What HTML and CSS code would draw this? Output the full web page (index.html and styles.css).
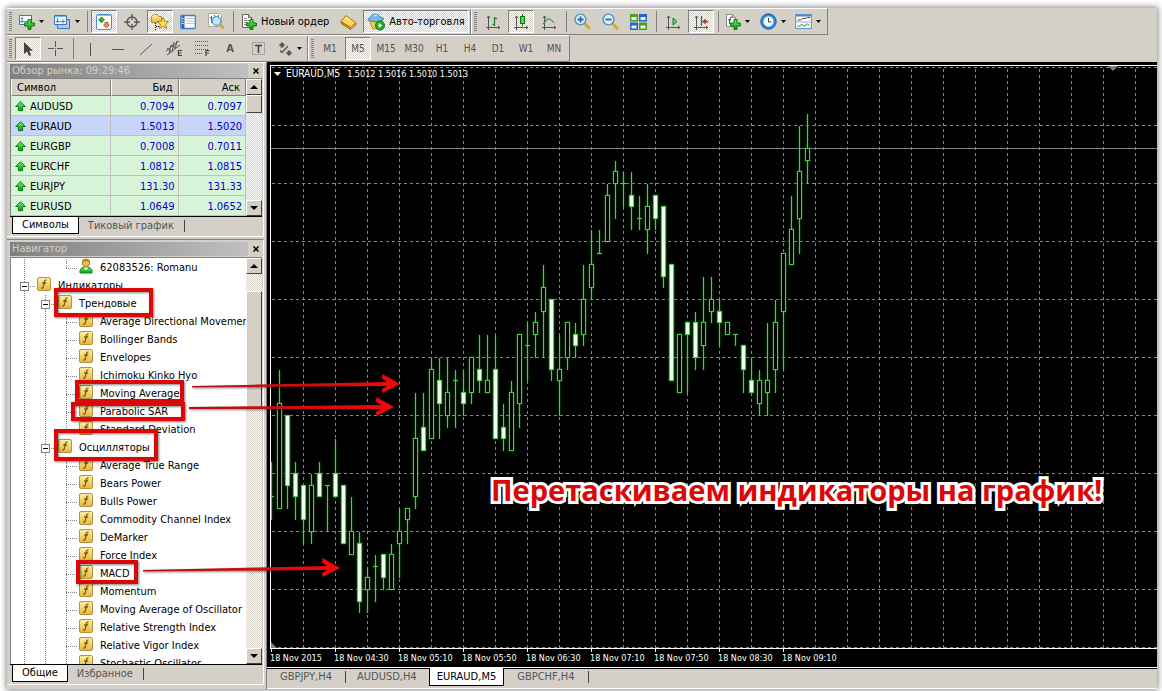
FILE: index.html
```html
<!DOCTYPE html>
<html lang="ru">
<head>
<meta charset="utf-8">
<title>EURAUD,M5</title>
<link rel="stylesheet" href="styles.css">
</head>
<body>
<!-- shared symbols -->
<svg class="defs" width="0" height="0">
	<defs>
		<linearGradient id="gold" x1="0" y1="0" x2="0" y2="1"><stop offset="0" stop-color="#fff3a8"/><stop offset="1" stop-color="#e3b53c"/></linearGradient>
		<linearGradient id="green" x1="0" y1="0" x2="0" y2="1"><stop offset="0" stop-color="#6df06d"/><stop offset="1" stop-color="#0a9a0a"/></linearGradient>
		<linearGradient id="red" x1="0" y1="0" x2="1" y2="0"><stop offset="0" stop-color="#a81414"/><stop offset="1" stop-color="#f00808"/></linearGradient>
	</defs>
	<symbol id="func" viewBox="0 0 14 14">
		<rect x=".5" y=".5" width="13" height="13" rx="1.5" fill="url(#gold)" stroke="#b8913a"/>
		<path d="M9.6 3.2C8 2.6 7.6 3.8 7.3 5L6.3 9.6C6 10.9 5.4 11.3 4.3 10.8M5.2 6h4" fill="none" stroke="#7a5a10" stroke-width="1.3"/>
	</symbol>
	<symbol id="up" viewBox="0 0 11 11">
		<path d="M5.5.7l4.8 4.8H7.6v4.2H3.4V5.500H.7z" fill="url(#green)" stroke="#0a7a1a"/>
	</symbol>
	<symbol id="plus" viewBox="0 0 11 11">
		<path d="M4 .6h3V4h3.400v3H7v3.400H4V7H.6V4H4z" fill="url(#green)" stroke="#067806"/>
	</symbol>
	<symbol id="drop" viewBox="0 0 7 4"><path d="M1 0h5L3.500 3z" fill="#000"/></symbol>
</svg>

<div class="window">
	<div class="toolbar wide">
		<i class="grip"></i>
		<button class="tool menu" title="Новый график"><svg width="16" height="16" viewBox="0 0 16 16"><path d="M.5 1.500h12v9H.5z" fill="#f4faff" stroke="#3a78b8"/><path d="M3 3v6M1.500 7.500h9M2 4.500h2" stroke="#5a88a8" fill="none"/><use href="#plus" x="5" y="5" width="11" height="11"/></svg><svg width="7" height="4"><use href="#drop" width="7" height="4"/></svg></button>
		<button class="tool menu" title="Профили"><svg width="18" height="16" viewBox="0 0 18 16"><path d="M4.500 5.500h12v9h-12z" fill="#a8ccf0" stroke="#3a78b8"/><path d="M1.500 1.500h12v9h-12z" fill="#eaf4ff" stroke="#3a78b8"/><path d="M2 2.500h11" stroke="#7ab0e8"/><path d="M4.500 4v5M3 7.500h9M10 5.500v4" stroke="#5a88a8"/></svg><svg width="7" height="4"><use href="#drop" width="7" height="4"/></svg></button>
		<i class="sep"></i>
		<button class="tool on" title="Обзор рынка"><svg width="16" height="16" viewBox="0 0 16 16"><rect x=".5" y=".5" width="15" height="15" rx="1.500" fill="#fff" stroke="#4a90d0"/><path d="M1 1.500h14" stroke="#8cc0ec"/><path d="M5.500 3l3 3H7v2H4V6H2.500z" fill="#2db82d" stroke="#0a7a1a" stroke-width=".7"/><path d="M10.500 14l-3-3H9V8.500h3V11h1.500z" fill="#ff9050" stroke="#d03808" stroke-width=".8"/></svg></button>
		<button class="tool" title="Перекрестие"><svg width="16" height="16" viewBox="0 0 16 16"><circle cx="8" cy="8" r="5" fill="none" stroke="#585858" stroke-width="1.500"/><path d="M8 0v6M8 10v6M0 8h6M10 8h6" stroke="#585858" stroke-width="1.300"/></svg></button>
		<button class="tool on" title="Навигатор"><svg width="18" height="18" viewBox="0 0 18 18"><path d="M.5 3.500l2-2h4l1 2h3v6H.5z" fill="url(#gold)" stroke="#b8913a"/><path d="M4.500 10v7M5 13.500h3" stroke="#222" stroke-dasharray="1 1"/><path d="M12 4.500l1.700 3.800 4 .4-3 2.700.9 4.100-3.600-2.100-3.600 2.100.9-4.100-3-2.700 4-.4z" fill="#ffdf50" stroke="#b08010"/></svg></button>
		<button class="tool" title="Окно данных"><svg width="16" height="16" viewBox="0 0 16 16"><rect x=".8" y="1.500" width="14.500" height="13" rx="1" fill="#fff" stroke="#3a80c8" stroke-width="1.300"/><path d="M3 2v12" stroke="#2868b0" stroke-width="3"/><path d="M6 4.500h8M6 7h8M6 9.500h8" stroke="#b8c4d8"/><path d="M2 4.500h1.500M2 7h1.500M2 9.500h1.500" stroke="#fff"/></svg></button>
		<button class="tool" title="Тестер стратегий"><svg width="17" height="17" viewBox="0 0 17 17"><path d="M.5.5h11l2 2v11H.5z" fill="#fdfdf4" stroke="#aaa"/><path d="M3.500 3v7M2 4.500h2M10.500 2v5M6.500 2v3" stroke="#486088"/><circle cx="8.500" cy="8" r="4.300" fill="#bfe2ff" fill-opacity=".85" stroke="#5a9ad0" stroke-width="1.300"/><path d="M12 11.500l4 4" stroke="#d8a020" stroke-width="2.400"/></svg></button>
		<i class="sep"></i>
		<button class="tool text"><svg width="16" height="16" viewBox="0 0 16 16"><path d="M1.500.5h6l3 3v10h-9z" fill="#fff" stroke="#666"/><path d="M7.500.5v3h3" fill="#ccc" stroke="#666"/><path d="M3 4.500h3M3 6.500h6M3 8.500h4M3 10.500h3" stroke="#888"/><use href="#plus" x="5" y="5" width="11" height="11"/></svg><span>Новый ордер</span></button>
		<button class="tool" title="MetaEditor"><svg width="17" height="16" viewBox="0 0 17 16"><path d="M6 1.500l10 7.500-5.500 4.500L1 7.500z" fill="#ffd95a" stroke="#b07808"/><path d="M1 7.500L10.500 13.500v2L1 9.500z" fill="#c88a10" stroke="#996008" stroke-width=".7"/><path d="M10.500 15.500L16 11V9l-5.500 4.500z" fill="#e8c060" stroke="#996008" stroke-width=".7"/><path d="M6 3.500l4 3" stroke="#fff4b8" stroke-width="1.500"/></svg></button>
		<button class="tool text on"><svg width="18" height="18" viewBox="0 0 18 18"><path d="M2 7l4 9 8-1 2-9z" fill="#f4cc48" stroke="#c09020"/><path d="M.8 6.500C3 4 4 4.500 4.500 3 5.500.5 11 .5 12 3c.5 1.500 3 1 5 2.500-3 3.500-12 4.500-16.200 1z" fill="#78b8e4" stroke="#3880b4"/><path d="M6 3.500c1-1.500 3-1.500 4-1" stroke="#d8f0ff" fill="none"/><circle cx="13" cy="12.500" r="4.500" fill="#22b02a" stroke="#0a7a14"/><path d="M11.700 10v5l3.600-2.500z" fill="#fff"/></svg><span>Авто-торговля</span></button>
		<i class="edge"></i>
		<i class="grip"></i>
		<button class="tool" title="Бары"><svg width="16" height="16" viewBox="0 0 16 16"><path d="M3.500 2v14M1 13.500h14M2 4l1.500-2L5 4M13 12l2 1.500-2 1.500" fill="none" stroke="#555"/><path d="M9.500 3v9M7.500 10.500h2M9.500 4.500H12" stroke="#1a8a2a" stroke-width="1.300" fill="none"/></svg></button>
		<button class="tool on" title="Японские свечи"><svg width="16" height="16" viewBox="0 0 16 16"><path d="M3.500 2v14M1 13.500h14M2 4l1.500-2L5 4M13 12l2 1.500-2 1.500" fill="none" stroke="#555"/><path d="M9.500 0v12" stroke="#0a7a1a"/><rect x="7.500" y="2.500" width="4" height="7" fill="#3ede4e" stroke="#0a7a1a"/></svg></button>
		<button class="tool" title="Линия"><svg width="16" height="16" viewBox="0 0 16 16"><path d="M3.500 2v14M1 13.500h14M2 4l1.500-2L5 4M13 12l2 1.500-2 1.500" fill="none" stroke="#555"/><path d="M2 10l4-4.500c2-1.500 4-.5 7 3.500" stroke="#3a9a4a" stroke-width="1.200" fill="none"/></svg></button>
		<i class="sep"></i>
		<button class="tool" title="Увеличить"><svg width="17" height="17" viewBox="0 0 17 17"><path d="M10 10l6 6" stroke="#d8a820" stroke-width="2.800"/><circle cx="6.500" cy="6.500" r="5.400" fill="#d8f0ff" stroke="#4a94c8" stroke-width="1.400"/><path d="M6.500 3.500v6M3.500 6.500h6" stroke="#2a6ca0" stroke-width="1.800"/></svg></button>
		<button class="tool" title="Уменьшить"><svg width="17" height="17" viewBox="0 0 17 17"><path d="M10 10l6 6" stroke="#d8a820" stroke-width="2.800"/><circle cx="6.500" cy="6.500" r="5.400" fill="#d8f0ff" stroke="#4a94c8" stroke-width="1.400"/><path d="M3.500 6.500h6" stroke="#2a6ca0" stroke-width="1.800"/></svg></button>
		<button class="tool" title="Окна"><svg width="17" height="16" viewBox="0 0 17 16"><path d="M0 0h8v7.500H0zM9 8.500h8V16H9z" fill="#48a020"/><path d="M9 0h8v7.500H9zM0 8.500h8V16H0z" fill="#2c62c8"/><path d="M1.500 3h5v3h-5zM10.500 3h5v3h-5zM1.500 11.500h5v3h-5zM10.500 11.500h5v3h-5z" fill="#e8f4f4"/></svg></button>
		<i class="sep"></i>
		<button class="tool" title="Автопрокрутка"><svg width="16" height="16" viewBox="0 0 16 16"><path d="M3.500 2v14M1 13.500h14M2 4l1.500-2L5 4M13 12l2 1.500-2 1.500" fill="none" stroke="#555"/><path d="M8 4v7l4-3.500z" fill="#6ad87a" stroke="#0a7a1a"/></svg></button>
		<button class="tool on" title="Сдвиг графика"><svg width="16" height="16" viewBox="0 0 16 16"><path d="M3.500 2v14M1 13.500h14M2 4l1.500-2L5 4M13 12l2 1.500-2 1.500" fill="none" stroke="#555"/><path d="M8.500 2v10" stroke="#226a9a" stroke-width="1.300"/><path d="M9.500 7.500l3-2.500v2H15v1h-2.500v2z" fill="#b03808" stroke="#b03808" stroke-width=".6"/></svg></button>
		<i class="sep"></i>
		<button class="tool menu" title="Индикаторы"><svg width="16" height="18" viewBox="0 0 16 18"><path d="M1.500 1.500h6l3 3v9h-9z" fill="#fff" stroke="#888"/><path d="M7.500 1.500v3h3" fill="#ccc" stroke="#888"/><path d="M7 4c-1.500-.5-1.800.5-2 2l-.5 5M3 7h3" stroke="#444" fill="none"/><use href="#plus" x="5" y="6" width="11" height="11"/></svg><svg width="7" height="4"><use href="#drop" width="7" height="4"/></svg></button>
		<button class="tool menu" title="Периоды"><svg width="17" height="17" viewBox="0 0 17 17"><circle cx="8.500" cy="8.500" r="7.700" fill="#2c84d8" stroke="#1a5ca8"/><circle cx="8.500" cy="8.500" r="5.200" fill="#f4faff" stroke="#80b8e8"/><path d="M8.500 5v4h3" stroke="#444" fill="none"/></svg><svg width="7" height="4"><use href="#drop" width="7" height="4"/></svg></button>
		<button class="tool menu" title="Шаблоны"><svg width="17" height="15" viewBox="0 0 17 15"><rect x=".6" y=".6" width="15.800" height="13.800" fill="#f6fbff" stroke="#5a94c8"/><path d="M1 1.500h15" stroke="#4a8ccc" stroke-width="2"/><path d="M1 8h15" stroke="#9ab8d8"/><path d="M2.500 6h3l2-1.500h3l2-1H15" stroke="#a03020" fill="none"/><path d="M2.500 12h2l2-1.500 3 1.500 3-2 2 1.500" stroke="#2a8a3a" fill="none"/></svg><svg width="7" height="4"><use href="#drop" width="7" height="4"/></svg></button>
	</div>

	<div class="toolbar">
		<i class="grip"></i>
		<button class="tool on" title="Курсор"><svg width="16" height="16" viewBox="0 0 16 16"><path d="M4 1v12l3-2.500 2 4.500 2.200-1L9.200 9.700H13z" fill="#444"/></svg></button>
		<button class="tool" title="Перекрестие"><svg width="16" height="16" viewBox="0 0 16 16"><path d="M7.500 0v6M7.500 9v6M0 7.500h6M9 7.500h6" stroke="#555"/><path d="M7 7h1v1H7z" fill="#555"/></svg></button>
		<i class="sep"></i>
		<button class="tool" title="Вертикальная линия"><svg width="16" height="16" viewBox="0 0 16 16"><path d="M8.500 2v13" stroke="#555"/></svg></button>
		<button class="tool" title="Горизонтальная линия"><svg width="16" height="16" viewBox="0 0 16 16"><path d="M2 8.500h12" stroke="#555"/></svg></button>
		<button class="tool" title="Трендовая линия"><svg width="16" height="16" viewBox="0 0 16 16"><path d="M2 14L14 3" stroke="#555"/></svg></button>
		<button class="tool" title="Канал"><svg width="17" height="17" viewBox="0 0 17 17"><path d="M0 11L13 1M1 15L14 5M3 14L5 5M6 12L8 2M9 9L11 1M1 8l5 4M5 5l5 3" stroke="#555" fill="none"/><path d="M16 10.500h-3.500v5H16M12.500 13h3" stroke="#444" stroke-width="1.200" fill="none"/></svg></button>
		<button class="tool" title="Фибоначчи"><svg width="17" height="17" viewBox="0 0 17 17"><path d="M1 1.500h14M1 5.500h14M1 9.500h14M1 13.500h8" stroke="#555" stroke-dasharray="1 1"/><path d="M15.500 10.500H12V16M12 13h3" stroke="#444" stroke-width="1.200" fill="none"/></svg></button>
		<button class="tool letter">A</button>
		<button class="tool" title="Метка"><svg width="15" height="15" viewBox="0 0 15 15"><path d="M1.500 1.500h12v12h-12z" fill="none" stroke="#777" stroke-dasharray="1 1"/><path d="M4 4.500h7M7.500 4v8" stroke="#444" stroke-width="1.600"/></svg></button>
		<button class="tool menu" title="Стрелки"><svg width="16" height="16" viewBox="0 0 16 16"><path d="M5 1l3.500 3.500H6.500v2h-3v-2H1.500zM12 15l-3.500-3.500h2v-2h3v2h2z" fill="#555"/><path d="M3 9.500l2 2L11 5" fill="none" stroke="#555" stroke-width="1.300"/></svg><svg width="7" height="4"><use href="#drop" width="7" height="4"/></svg></button>
		<i class="edge"></i>
		<i class="grip"></i>
		<button class="tool period">M1</button>
		<button class="tool period on">M5</button>
		<button class="tool period">M15</button>
		<button class="tool period">M30</button>
		<button class="tool period">H1</button>
		<button class="tool period">H4</button>
		<button class="tool period">D1</button>
		<button class="tool period">W1</button>
		<button class="tool period">MN</button>
	</div>

	<div class="workspace">
		<div class="sidebar">
			<div class="panel market">
				<div class="caption"><span>Обзор рынка: 09:29:46</span><button class="close" title="Закрыть"><svg width="6" height="6" viewBox="0 0 6 6"><path d="M.5.5l5 5M5.500.5l-5 5" stroke="#000" stroke-width="1.500"/></svg></button></div>
				<div class="pane">
					<table class="quotes">
						<thead><tr><th>Символ</th><th>Бид</th><th>Аск</th></tr></thead>
						<tbody>
							<tr><td><svg width="11" height="11"><use href="#up"/></svg>AUDUSD</td><td>0.7094</td><td>0.7097</td></tr>
							<tr class="current"><td><svg width="11" height="11"><use href="#up"/></svg>EURAUD</td><td>1.5013</td><td>1.5020</td></tr>
							<tr><td><svg width="11" height="11"><use href="#up"/></svg>EURGBP</td><td>0.7008</td><td>0.7011</td></tr>
							<tr><td><svg width="11" height="11"><use href="#up"/></svg>EURCHF</td><td>1.0812</td><td>1.0815</td></tr>
							<tr><td><svg width="11" height="11"><use href="#up"/></svg>EURJPY</td><td>131.30</td><td>131.33</td></tr>
							<tr><td><svg width="11" height="11"><use href="#up"/></svg>EURUSD</td><td>1.0649</td><td>1.0652</td></tr>
						</tbody>
					</table>
					<div class="scroll"><button class="up" title="Вверх"></button><div class="thumb"></div><button class="down" title="Вниз"></button></div>
				</div>
				<div class="tabs"><button class="tab active">Символы</button><button class="tab">Тиковый график</button></div>
			</div>

			<div class="panel navigator">
				<div class="caption"><span>Навигатор</span><button class="close" title="Закрыть"><svg width="6" height="6" viewBox="0 0 6 6"><path d="M.5.5l5 5M5.500.5l-5 5" stroke="#000" stroke-width="1.500"/></svg></button></div>
				<div class="pane">
					<ul class="tree">
						<li><i class="guide"></i><i class="guide empty"></i><i class="joint last"></i><svg width="14" height="16" viewBox="0 0 14 16"><path d="M1 15c-.5-4 1.500-6 6-6s6.500 2 6 6z" fill="url(#green)" stroke="#0a8a1a"/><path d="M5 9.500l2 3 2-3z" fill="#fff"/><circle cx="7" cy="4.800" r="3.800" fill="#ecc050" stroke="#a87818"/><path d="M3.500 4C4 0 10 0 10.500 4 8 3 6 3 3.500 4z" fill="#b88420"/></svg>62083526: Romanu</li>
						<li><i class="joint"><button class="expander" title="Свернуть"></button></i><svg width="14" height="14"><use href="#func"/></svg>Индикаторы</li>
						<li><i class="guide"></i><i class="joint"><button class="expander" title="Свернуть"></button></i><svg width="14" height="14"><use href="#func"/></svg>Трендовые</li>
						<li><i class="guide"></i><i class="guide"></i><i class="joint"></i><svg width="14" height="14"><use href="#func"/></svg>Average Directional Movement</li>
						<li><i class="guide"></i><i class="guide"></i><i class="joint"></i><svg width="14" height="14"><use href="#func"/></svg>Bollinger Bands</li>
						<li><i class="guide"></i><i class="guide"></i><i class="joint"></i><svg width="14" height="14"><use href="#func"/></svg>Envelopes</li>
						<li><i class="guide"></i><i class="guide"></i><i class="joint"></i><svg width="14" height="14"><use href="#func"/></svg>Ichimoku Kinko Hyo</li>
						<li><i class="guide"></i><i class="guide"></i><i class="joint"></i><svg width="14" height="14"><use href="#func"/></svg>Moving Average</li>
						<li><i class="guide"></i><i class="guide"></i><i class="joint"></i><svg width="14" height="14"><use href="#func"/></svg>Parabolic SAR</li>
						<li><i class="guide"></i><i class="guide"></i><i class="joint last"></i><svg width="14" height="14"><use href="#func"/></svg>Standard Deviation</li>
						<li><i class="guide"></i><i class="joint"><button class="expander" title="Свернуть"></button></i><svg width="14" height="14"><use href="#func"/></svg>Осцилляторы</li>
						<li><i class="guide"></i><i class="guide"></i><i class="joint"></i><svg width="14" height="14"><use href="#func"/></svg>Average True Range</li>
						<li><i class="guide"></i><i class="guide"></i><i class="joint"></i><svg width="14" height="14"><use href="#func"/></svg>Bears Power</li>
						<li><i class="guide"></i><i class="guide"></i><i class="joint"></i><svg width="14" height="14"><use href="#func"/></svg>Bulls Power</li>
						<li><i class="guide"></i><i class="guide"></i><i class="joint"></i><svg width="14" height="14"><use href="#func"/></svg>Commodity Channel Index</li>
						<li><i class="guide"></i><i class="guide"></i><i class="joint"></i><svg width="14" height="14"><use href="#func"/></svg>DeMarker</li>
						<li><i class="guide"></i><i class="guide"></i><i class="joint"></i><svg width="14" height="14"><use href="#func"/></svg>Force Index</li>
						<li><i class="guide"></i><i class="guide"></i><i class="joint"></i><svg width="14" height="14"><use href="#func"/></svg>MACD</li>
						<li><i class="guide"></i><i class="guide"></i><i class="joint"></i><svg width="14" height="14"><use href="#func"/></svg>Momentum</li>
						<li><i class="guide"></i><i class="guide"></i><i class="joint"></i><svg width="14" height="14"><use href="#func"/></svg>Moving Average of Oscillator</li>
						<li><i class="guide"></i><i class="guide"></i><i class="joint"></i><svg width="14" height="14"><use href="#func"/></svg>Relative Strength Index</li>
						<li><i class="guide"></i><i class="guide"></i><i class="joint"></i><svg width="14" height="14"><use href="#func"/></svg>Relative Vigor Index</li>
						<li><i class="guide"></i><i class="guide"></i><i class="joint"></i><svg width="14" height="14"><use href="#func"/></svg>Stochastic Oscillator</li>
					</ul>
					<div class="scroll"><button class="up" title="Вверх"></button><div class="thumb"></div><button class="down" title="Вниз"></button></div>
				</div>
				<div class="tabs"><button class="tab active">Общие</button><button class="tab">Избранное</button></div>
			</div>
		</div>

		<div class="charts">
			<div class="chart">
				<div class="plot">
					<svg id="plot" class="canvas"></svg>
					<div class="info"><svg width="7" height="4" viewBox="0 0 7 4"><path d="M0 0h7L3.500 4z" fill="#fff"/></svg><span>EURAUD,M5</span><span class="prices">1.5012 1.5016 1.5010 1.5013</span></div>
				</div>
				<div class="axis"><span>18 Nov 2015</span><span>18 Nov 04:30</span><span>18 Nov 05:10</span><span>18 Nov 05:50</span><span>18 Nov 06:30</span><span>18 Nov 07:10</span><span>18 Nov 07:50</span><span>18 Nov 08:30</span><span>18 Nov 09:10</span></div>
			</div>
			<div class="tabs"><button class="tab">GBPJPY,H4</button><button class="tab">AUDUSD,H4</button><button class="tab active">EURAUD,M5</button><button class="tab">GBPCHF,H4</button></div>
		</div>
	</div>

	<!-- marks drawn over the terminal -->
	<svg class="marks">
		<g fill="none" stroke="#dc0808" stroke-width="4">
			<rect x="49" y="282" width="95" height="25"/>
			<rect x="70" y="374" width="105" height="19"/>
			<rect x="66" y="396" width="110" height="15"/>
			<rect x="49" y="423" width="100" height="28"/>
			<rect x="71" y="554" width="58" height="20"/>
		</g>
		<g fill="url(#red)">
			<path d="M185 378L380 374l-5-3.500.5-4.500 17.500 10-17.500 9-.5-4 5-3L185 379.500z"/>
			<path d="M182 399L374 397l-5-3.500.5-4.500 17.500 10-17.500 9-.5-4 5-3L182 401z"/>
			<path d="M136 562L320 558l-5-3.500.5-4.500 17.500 10-17.500 9-.5-4 5-3L136 563.500z"/>
		</g>
	</svg>
	<div class="slogan">Перетаскиваем индикаторы на график!</div>
</div>

<script src="chart.js"></script>
</body>
</html>
```
FILE: styles.css
```css
* {
	box-sizing: border-box;
	margin: 0;
	padding: 0;
}

body {
	background: #fff;
	font: 11px/14px "DejaVu Sans Condensed", "Noto Sans", sans-serif;
	color: #000;
	overflow: hidden;
}

button {
	font: inherit;
	color: inherit;
	border: 0;
	background: none;
}

svg {
	flex: none;
}

.defs {
	position: absolute;
}

.window {
	position: relative;
	display: flex;
	flex-direction: column;
	height: calc(100vh - 10px);
	margin: 8px 5px 2px 7px;
	background: #d4d0c8;
	box-shadow: 0 0 6px 1px #888;
}

/**** toolbars ****/
.toolbar {
	display: flex;
	align-items: center;
	align-self: flex-start;
	gap: 2px;
	height: 27px;
	padding: 0 2px;
	border-top: 1px solid #fff;
	border-bottom: 1px solid #808080;
	border-right: 1px solid #808080;
}

.grip {
	width: 3px;
	height: 19px;
	margin-right: 1px;
	background: repeating-linear-gradient(#808080 0 1px, transparent 1px 2px);
}

.sep {
	width: 1px;
	height: 21px;
	margin: 0 1px 0 2px;
	background: #808080;
}

.edge {
	width: 2px;
	height: 25px;
	margin-left: -1px;
	background: #808080;
	border-right: 1px solid #fff;
}

.tool {
	display: flex;
	align-items: center;
	justify-content: center;
	width: 26px;
	height: 23px;
	border: 1px solid transparent;
}

.tool.menu {
	width: 33px;
	gap: 3px;
}

.tool.text {
	width: auto;
	padding: 0 3px;
	gap: 4px;
}

.tool.period {
	font-size: 10px;
	color: #505050;
}

.tool.letter {
	font-size: 11px;
	font-weight: bold;
	color: #555;
}

.tool.on {
	border-color: #808080 #fff #fff #808080;
	background: repeating-conic-gradient(#fff 0 25%, #d4d0c8 0 50%) 0 0 / 2px 2px;
}

/**** panels ****/
.workspace {
	display: flex;
	flex: 1;
	min-height: 0;
}

.sidebar {
	display: flex;
	flex-direction: column;
	gap: 2px;
	width: 260px;
	padding: 0 2px 4px 0;
	border-top: 1px solid #fff;
	border-right: 1px solid #808080;
}

.panel {
	display: flex;
	flex-direction: column;
	padding: 1px 1px 2px 3px;
	border-right: 1px solid #fff;
	border-bottom: 1px solid #fff;
}

.navigator {
	flex: 1;
	min-height: 0;
	border-top: 1px solid #808080;
}

.caption {
	display: flex;
	align-items: center;
	height: 14px;
	color: #d4d0c8;
}

.navigator .caption {
	height: 16px;
}

.caption span {
	flex: 1;
	padding-left: 2px;
	background: linear-gradient(90deg, #808080, #c0c0c0);
}

.close {
	display: flex;
	justify-content: center;
	width: 12px;
	margin-left: 2px;
}

.pane {
	display: flex;
	border: solid #808080;
	border-width: 1px 0 0 1px;
}

.navigator .pane {
	flex: 1;
	min-height: 0;
	background: #fff;
}

.quotes {
	flex: 1;
	border-collapse: separate;
	border-spacing: 0;
	table-layout: fixed;
	line-height: 14px;
}

.quotes th {
	height: 17px;
	padding: 2px 5px 0;
	font-weight: normal;
	text-align: right;
	background: #d4d0c8;
	border-right: 1px solid #808080;
	border-bottom: 1px solid #808080;
	border-left: 1px solid #fff;
}

.quotes th:first-child {
	width: 100px;
	text-align: left;
}

.quotes td {
	height: 20px;
	padding: 2px 3px 0;
	text-align: right;
	color: #0000d0;
	background: #d8f4d8;
	border-right: 1px solid #c0c0c0;
	border-bottom: 1px solid #c0c0c0;
}

.quotes td:first-child {
	padding-left: 4px;
	text-align: left;
	color: #000;
}

.quotes td svg {
	margin-right: 4px;
	vertical-align: -2px;
}

.quotes .current td {
	background: #c8d4f8;
}

.scroll {
	display: flex;
	flex-direction: column;
	width: 16px;
	background: repeating-conic-gradient(#fff 0 25%, #d4d0c8 0 50%) 0 0 / 2px 2px;
}

.scroll button,
.thumb {
	height: 16px;
	background: #d4d0c8;
	border: 1px solid;
	border-color: #fff #404040 #404040 #fff;
}

.scroll button::before {
	content: "";
	display: block;
	width: 0;
	margin: 0 auto;
	border: 4px solid transparent;
	border-top: 0;
	border-bottom-color: #000;
}

.scroll .down::before {
	border-top: 4px solid #000;
	border-bottom: 0;
}

.scroll .down {
	margin-top: auto;
}

.market .thumb {
	height: 18px;
}

.navigator .thumb {
	height: 117px;
	margin-top: 17px;
}

/**** tree ****/
.tree {
	flex: 1;
	min-width: 0;
	padding-top: 1px;
	overflow: hidden;
	list-style: none;
}

.tree li {
	display: flex;
	align-items: center;
	height: 18px;
	padding-left: 13px;
	white-space: nowrap;
}

.tree svg {
	margin: 0 7px 4px 0;
}

.guide,
.joint {
	flex: none;
	width: 21px;
	height: 18px;
	background: repeating-linear-gradient(#808080 0 1px, transparent 1px 2px) 0 0 / 1px 18px no-repeat;
}

.guide.empty {
	background: none;
}

.joint {
	display: flex;
	align-items: center;
	width: 13px;
	background:
		repeating-linear-gradient(#808080 0 1px, transparent 1px 2px) 0 0 / 1px 18px no-repeat,
		repeating-linear-gradient(90deg, #808080 0 1px, transparent 1px 2px) 0 9px / 12px 1px no-repeat;
}

.joint.last {
	background-size: 1px 10px, 12px 1px;
}

.expander {
	width: 9px;
	height: 9px;
	margin-left: -4px;
	border: 1px solid #808080;
	background: linear-gradient(#000, #000) center / 5px 1px no-repeat #fff;
}

/**** tabs ****/
.tabs {
	display: flex;
	height: 18px;
	padding-left: 2px;
	border-top: 1px solid #000;
}

.tab {
	display: flex;
	align-items: center;
	padding: 0 9px;
	color: #555;
}

.tab:not(.active)::after {
	content: "";
	width: 1px;
	height: 12px;
	margin: 0 -10px 0 10px;
	background: #444;
}

.tab.active {
	color: #000;
	background: #fff;
	border: solid #000;
	border-width: 0 1px 1px;
}

.tabs .tab:nth-last-child(n+2):has(+ .active)::after {
	visibility: hidden;
}

/**** chart ****/
.charts {
	display: flex;
	flex: 1;
	flex-direction: column;
	min-width: 0;
}

.charts .tabs {
	height: 22px;
	padding: 0 0 2px;
	border-top: 1px solid #fff;
	border-bottom: 1px solid #fff;
	box-shadow: inset 0 1px #000;
}

.charts .tab {
	padding: 0 10px;
	margin-left: 3px;
}

.charts .tab:not(.active)::after {
	margin: 0 -12px 0 13px;
}

.charts .tab.active {
	padding: 0 7px;
	margin: 0;
}

.chart {
	display: flex;
	flex: 1;
	flex-direction: column;
	min-height: 0;
	padding: 3px 0 0 3px;
	background: #000;
}

.plot {
	position: relative;
	flex: 1;
	min-height: 0;
	border: solid #fff;
	border-width: 1px 0 1px 1px;
}

.canvas {
	display: block;
	width: 100%;
	height: 100%;
}

.info {
	position: absolute;
	top: 1px;
	left: 3px;
	display: flex;
	align-items: center;
	gap: 5px;
	font-size: 10px;
	color: #fff;
}

.prices {
	padding-left: 2px;
	font-size: 9px;
}

.axis {
	display: flex;
	height: 18px;
	font-size: 9px;
	line-height: 18px;
	color: #fff;
}

.axis span {
	flex: none;
	width: 64px;
	white-space: nowrap;
	background: linear-gradient(#fff, #fff) 1px 0 / 1px 3px no-repeat;
}

.grid {
	stroke: #808894;
	stroke-dasharray: 3 3;
}

.bid {
	stroke: #78828c;
}

.candles {
	filter: drop-shadow(0 0 1px #0a8c0a);
}

.candle {
	fill: #000;
	stroke: #44d044;
	shape-rendering: crispEdges;
}

.candle.bear {
	fill: #f0fff0;
}

.corner {
	fill: #78828c;
}

/**** marks ****/
.marks {
	position: absolute;
	top: 0;
	left: 0;
	width: 100%;
	height: 100%;
	pointer-events: none;
	filter: drop-shadow(1px 1px 1px rgba(0, 0, 0, .5));
}

.slogan {
	position: absolute;
	top: 462px;
	left: 484px;
	font: bold 29px/40px "Open Sans", "Noto Sans", sans-serif;
	white-space: nowrap;
	color: #dc0808;
	-webkit-text-stroke: 6px #fff;
	stroke-linejoin: round;
	paint-order: stroke fill;
}
```
FILE: chart.js
```javascript
// [high, body top, body bottom, low, bear] in price steps below the 1.5015 grid line
var bars = [
	[29,32,32,34], [21,24,33,33], [25,25,31,33,1], [29,30,32,34,1], [31,31,34,36,1],
	[30,31,35,36], [29,30,32,32,1], [31,31,31,35], [27,30,32,32,1], [31,31,36,36,1],
	[32,35,37,37], [35,36,41,42,1], [38,39,40,42], [37,38,38,41], [37,37,39,40,1],
	[36,37,40,40], [33,35,36,39], [33,33,34,36], [23,27,32,33], [23,26,28,28,1],
	[20,21,27,27], [20,22,24,27,1], [20,23,25,26], [21,22,22,26], [21,23,24,25,1],
	[20,20,23,24], [18,21,22,23,1], [18,22,23,23], [18,21,27,27,1], [24,26,27,28,1],
	[22,23,28,28], [18,18,24,26], [17,19,19,22], [16,17,18,20], [12,14,16,20],
	[15,15,21,22,1], [18,21,22,25], [17,17,20,21], [17,18,19,20,1], [12,15,18,19],
	[9,12,14,15], [9,11,11,11], [5,6,10,10], [3,4,5,8], [4,5,5,7],
	[4,6,7,9,1], [6,8,8,9], [5,7,9,11], [6,6,8,9,1], [7,7,13,14,1],
	[12,12,22,22,1], [18,18,23,23], [17,17,18,23,1], [16,17,20,21,1], [13,17,19,21],
	[13,15,16,17], [15,16,17,19,1], [17,17,18,18], [18,18,18,19], [19,19,21,23,1],
	[20,22,23,23,1], [21,22,24,25], [17,22,23,25], [15,17,21,23], [11,11,16,21],
	[6,9,12,12], [0,4,8,11], [-1,2,3,5]
];

var plot = document.getElementById("plot");

function draw(parent, name, attrs) {
	var el = document.createElementNS("http://www.w3.org/2000/svg", name);
	for (var key in attrs) {
		el.setAttribute(key, attrs[key]);
	}
	return parent.appendChild(el);
}

function y(step) {
	return Math.round(59 + step * 11.6) + 0.5;
}

// grid
for (var x = 32.5; x < plot.clientWidth; x += 32) {
	draw(plot, "line", { "class": "grid", x1: x, y1: 3, x2: x, y2: "100%" });
}
for (var row = -5; y(row) < plot.clientHeight; row += 5) {
	draw(plot, "line", { "class": "grid", x1: 1, y1: y(row), x2: "100%", y2: y(row) });
}

// bid line
draw(plot, "line", { "class": "bid", x1: 0, y1: y(2), x2: "100%", y2: y(2) });

// candles
var candles = draw(plot, "g", { "class": "candles" });
bars.forEach(function (bar, i) {
	var cx = i * 8 + 0.5;
	var type = bar[4] ? "candle bear" : "candle";
	draw(candles, "line", { "class": type, x1: cx, y1: y(bar[0]), x2: cx, y2: y(bar[3]) });
	if (bar[1] === bar[2]) {
		draw(candles, "line", { "class": type, x1: cx - 2.5, y1: y(bar[1]), x2: cx + 2.5, y2: y(bar[1]) });
	} else {
		draw(candles, "rect", { "class": type, x: cx - 2, y: y(bar[1]), width: 4, height: y(bar[2]) - y(bar[1]) });
	}
});

// shift marker and scroll corner
var right = plot.clientWidth - 49;
var bottom = plot.clientHeight;
draw(plot, "path", { "class": "corner", d: "M" + right + " 0h10l-5 5z" });
draw(plot, "path", { "class": "corner", d: "M0 " + bottom + "v-6l6 6z" });
```
